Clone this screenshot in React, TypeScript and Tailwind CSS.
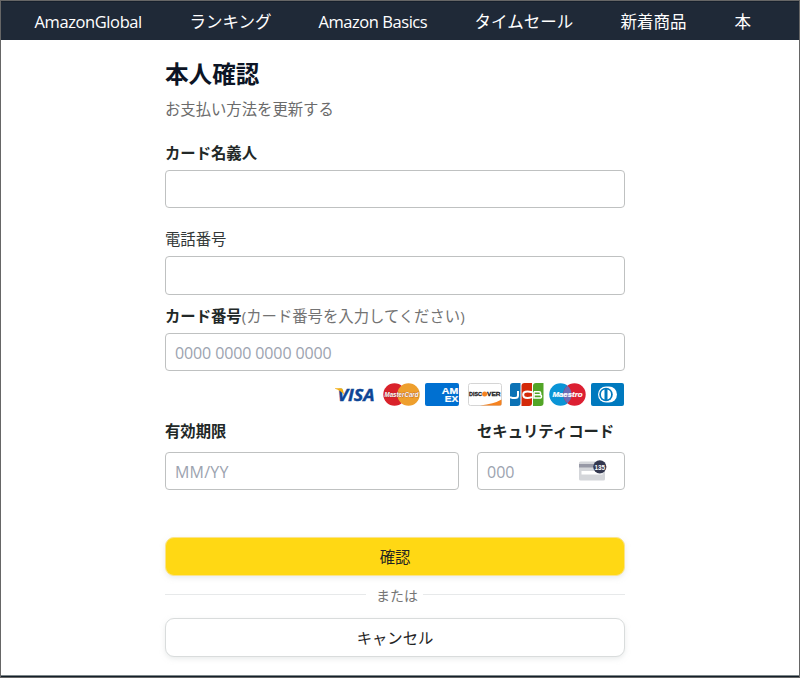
const Visa = () => (
  <svg className="w-10 h-[23px]" viewBox="0 0 40 23">
    <text x="2.500" y="17.500" fontSize="16" fontWeight="700" fontStyle="italic" fontFamily="Open Sans" fill="#0e4595" stroke="#0e4595" strokeWidth="0.400" textLength="37" lengthAdjust="spacingAndGlyphs">
      VISA
    </text>
    <path d="M0 5.300h6q1.600 0 2 1.700l1.200 5Q6 7.500 0 5.800z" fill="#f2ae14" />
  </svg>
);

const MasterCard = () => (
  <svg className="ml-2 w-[37px] h-[23px]" viewBox="0 0 37 23">
    <circle cx="11.500" cy="11.500" r="11.200" fill="#d9222a" />
    <circle cx="25.500" cy="11.500" r="11.200" fill="#ee9f2d" />
    <text x="1.500" y="14.300" fontSize="7.800" fontWeight="700" fontStyle="italic" fontFamily="Liberation Sans" fill="#fff" stroke="#8a2a20" strokeWidth="0.500" paintOrder="stroke" textLength="34" lengthAdjust="spacingAndGlyphs">
      MasterCard
    </text>
  </svg>
);

const Amex = () => (
  <svg className="ml-[5px] w-[34px] h-[23px]" viewBox="0 0 34 23">
    <rect width="34" height="23" rx="2" fill="#0070d1" />
    <g fontSize="9.800" fontWeight="700" fontFamily="Liberation Sans" fill="#fff" stroke="#fff" strokeWidth="0.200">
      <text x="16.800" y="11.300" textLength="16.500" lengthAdjust="spacingAndGlyphs">AM</text>
      <text x="19.800" y="19.200" textLength="13.500" lengthAdjust="spacingAndGlyphs">EX</text>
    </g>
  </svg>
);

const Discover = () => (
  <svg className="ml-[9px] w-[34px] h-[23px]" viewBox="0 0 34 23">
    <rect x="0.500" y="0.500" width="33" height="22" rx="2" fill="#fff" stroke="#d5d5d5" />
    <path d="M12 22.500Q26 21 33.500 16.500V21q0 1.500-1.500 1.500z" fill="#f58220" />
    <g fontSize="6.200" fontWeight="700" fontFamily="Liberation Sans" fill="#222" stroke="#222" strokeWidth="0.300">
      <text x="1" y="13.200" textLength="13" lengthAdjust="spacingAndGlyphs">DISC</text>
      <text x="19" y="13.200" textLength="13.500" lengthAdjust="spacingAndGlyphs">VER</text>
    </g>
    <circle cx="16.600" cy="11" r="2.500" fill="#f58220" />
  </svg>
);

const Jcb = () => (
  <svg className="ml-2 w-[34px] h-[23px]" viewBox="0 0 34 23">
    <path d="M3 0h7.500v20q0 3-3 3H0V3q0-3 3-3z" fill="#0c72b5" />
    <path d="M14.500 0H22v20q0 3-3 3h-7.500V3q0-3 3-3z" fill="#d42a0a" />
    <path d="M26 0h7.500v20q0 3-3 3H23V3q0-3 3-3z" fill="#52a527" />
    <g fill="none" stroke="#fff" strokeWidth="2">
      <path d="M8 8v4.500q0 2.600-3 2.600-2.500 0-5-1" />
      <path d="M22 9.300q-2.500-.8-4.500-.8-4.300 0-4.300 3.200t4.300 3.200q2 0 4.500-.8" />
      <path d="M24 8.800h5q1.700 0 1.700 1.500t-1.700 1.500h-5 5.500q2 0 2 1.600t-2 1.600H24V8.800" strokeWidth="1.500" />
    </g>
  </svg>
);

const Maestro = () => (
  <svg className="ml-[5px] w-[37px] h-[23px]" viewBox="0 0 37 23">
    <circle cx="11.500" cy="11.500" r="11.200" fill="#0a94d6" />
    <circle cx="25.500" cy="11.500" r="11.200" fill="#dc1f32" />
    <path d="M18.500 2.800a11.200 11.200 0 0 1 0 17.400a11.200 11.200 0 0 1 0-17.400z" fill="#6c6bb5" />
    <text x="3.500" y="14.300" fontSize="7.800" fontWeight="700" fontStyle="italic" fontFamily="Liberation Sans" fill="#fff" stroke="#fff" strokeWidth="0.200" textLength="30" lengthAdjust="spacingAndGlyphs">
      Maestro
    </text>
  </svg>
);

const Diners = () => (
  <svg className="ml-[5px] w-[33px] h-[23px]" viewBox="0 0 33 23">
    <rect width="33" height="23" rx="2" fill="#0079be" />
    <path d="M15 3.500h3a8 8 0 0 1 0 16h-3a8 8 0 0 1 0-16z" fill="#fff" />
    <circle cx="15" cy="11.500" r="6.800" fill="#0079be" />
    <path d="M13.500 6.500v10a5.300 5.300 0 0 1 0-10zM16.500 6.500v10a5.300 5.300 0 0 0 0-10z" fill="#fff" />
  </svg>
);

const CodeHint = () => (
  <svg className="w-7 h-[21px]" viewBox="0 0 28 21">
    <rect y="1.500" width="26" height="19" rx="1.500" fill="#d4d6da" />
    <rect y="4" width="26" height="3.500" fill="#9799a6" />
    <rect x="2.500" y="11" width="21" height="3.500" fill="#fff" />
    <circle cx="20.800" cy="6.800" r="6.600" fill="#333850" />
    <text x="15.500" y="9.700" fontSize="8" fontWeight="700" fontFamily="Liberation Sans" fill="#fff" textLength="10.500" lengthAdjust="spacingAndGlyphs">
      135
    </text>
  </svg>
);

const inputStyle =
  "block w-full rounded-[4px] border border-[#bfc1c1] bg-white px-[9px] text-[#222] placeholder:text-[#9ca3af] outline-none";

const labelStyle = "block h-[23px] leading-[23px] font-bold text-[#222827]";

export default function App() {
  return (
    <div className="flex h-[678px] w-[800px] flex-col border border-[#666] bg-white font-['Open_Sans','Noto_Sans_CJK_JP',sans-serif] text-[15.35px] text-[#1f2424]">
      <nav className="flex h-[39px] shrink-0 items-center border-t border-[#17202c] bg-[#1f2937] pt-0.5 pl-[33.5px] text-[16.5px] whitespace-nowrap text-white">
        <span className="w-[155px] tracking-[-0.4px]">AmazonGlobal</span>
        <span className="w-[129px]">ランキング</span>
        <span className="w-[156px] tracking-[-0.45px]">Amazon Basics</span>
        <span className="w-[146px]">タイムセール</span>
        <span className="w-[114px]">新着商品</span>
        <span>本</span>
      </nav>
      <main className="ml-[164px] flex w-[460px] flex-1 flex-col">
        <h1 className="mt-4 h-9 text-[23.6px] leading-9 font-bold text-[#0c1425]">本人確認</h1>
        <p className="mt-1.5 h-[23px] leading-[23px] text-[#6b6b6b]">お支払い方法を更新する</p>

        <label className={`${labelStyle} mt-[21px]`}>カード名義人</label>
        <input className={`${inputStyle} mt-[5px] h-[38px]`} />

        <label className="mt-5 block h-[23px] leading-[23px] text-[#333838]">電話番号</label>
        <input className={`${inputStyle} mt-[5px] h-[39px]`} />

        <label className={`${labelStyle} mt-2.5`}>
          カード番号
          <span className="font-normal text-[#737373]">(カード番号を入力してください)</span>
        </label>
        <input
          className={`${inputStyle} mt-[5px] h-[38px] pt-0.5 text-[16px] tracking-[-0.12px]`}
          placeholder="0000 0000 0000 0000"
        />

        <div className="mt-3 flex h-[23px] pl-[170px]">
          <Visa />
          <MasterCard />
          <Amex />
          <Discover />
          <Jcb />
          <Maestro />
          <Diners />
        </div>

        <div className="mt-[14px] flex justify-between">
          <div className="w-[294px]">
            <label className={labelStyle}>有効期限</label>
            <input className={`${inputStyle} mt-[9px] h-[38px] pt-0.5 text-[16px] tracking-[0.2px]`} placeholder="MM/YY" />
          </div>
          <div className="w-[148px]">
            <label className={labelStyle}>セキュリティコード</label>
            <div className="relative mt-[9px]">
              <input className={`${inputStyle} h-[38px] pt-0.5 text-[16px]`} placeholder="000" />
              <span className="absolute top-[8px] right-[18px]">
                <CodeHint />
              </span>
            </div>
          </div>
        </div>

        <button className="mt-[47px] h-[39px] rounded-[9px] border border-[#fbe48a] bg-[#ffd814] pt-0.5 shadow-[0_2px_5px_rgba(213,217,217,0.5)]">
          確認
        </button>
        <div className="flex h-[42px] items-center text-[14px] text-[#767676]">
          <span className="-mt-[5px] h-px w-[201px] bg-[#e7e9ea]" />
          <span className="-mt-[3px] ml-2.5 mr-[5px]">または</span>
          <span className="-mt-[5px] h-px flex-1 bg-[#e7e9ea]" />
        </div>
        <button className="h-[39px] rounded-[9px] border border-[#d9dcdc] bg-white pt-0.5 shadow-[0_2px_5px_rgba(213,217,217,0.5)]">
          キャンセル
        </button>
      </main>
      <footer className="h-0.5 shrink-0 border-t border-[#7d8688] bg-[#131f29]" />
    </div>
  );
}
